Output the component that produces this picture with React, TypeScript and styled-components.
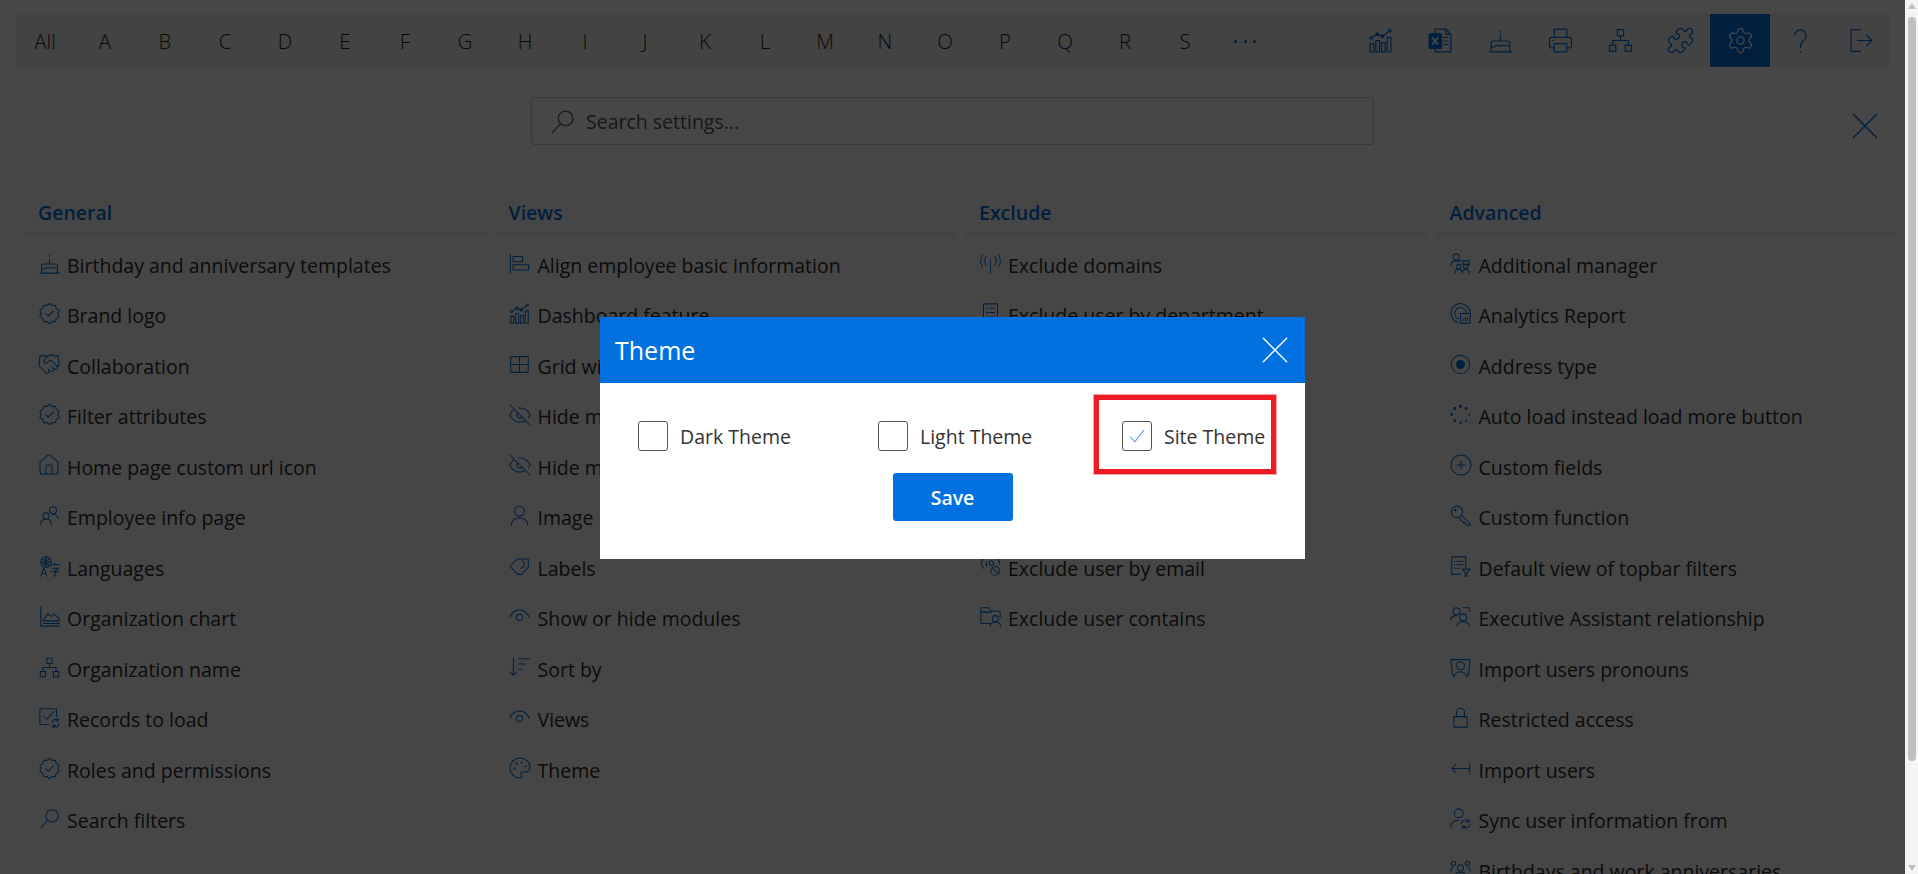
import React from 'react'
import styled, { createGlobalStyle } from 'styled-components'
import { CirclePlus, EyeOff, Handshake, House, Palette, Puzzle, Settings } from 'lucide-react'

const GlobalStyle = createGlobalStyle`
  html, body {
    margin: 0;
    height: 100%;
    overflow: hidden;
    background: #fff;
  }
  body {
    font-family: 'Open Sans', 'Noto Sans', sans-serif;
    color: #2b2b2b;
  }
`

const BLUE = '#0071de'

const Page = styled.div`
  display: flex;
  width: 1918px;
  height: 874px;
`

const Main = styled.div`
  position: relative;
  width: 1905px;
  height: 874px;
  overflow: hidden;
  background: #fff;
`

const Toolbar = styled.div`
  display: flex;
  justify-content: space-between;
  height: 53px;
  margin: 14px 15px 0;
  background: #f0f0f0;
`

const ToolGroup = styled.div`
  display: flex;
`

const Letter = styled.div`
  display: flex;
  align-items: center;
  justify-content: center;
  width: 60px;
  font-size: 20.5px;
  font-weight: 300;
  color: #1f1f1f;
`

const Dots = styled(Letter)`
  gap: 6.5px;
`

const Dot = styled.i`
  width: 3px;
  height: 3px;
  margin-top: 1px;
  border-radius: 50%;
  background: ${BLUE};
`

const ToolButton = styled.div<{ $active?: boolean }>`
  display: flex;
  align-items: center;
  justify-content: center;
  width: 60px;
  color: ${({ $active }) => ($active ? '#fff' : BLUE)};
  background: ${({ $active }) => ($active ? BLUE : 'transparent')};
`

const SearchRow = styled.div`
  display: grid;
  grid-template-columns: 1fr 843px 1fr;
  height: 48px;
  margin-top: 30px;
`

const SearchBox = styled.div`
  grid-column: 2;
  display: flex;
  align-items: center;
  gap: 11px;
  padding-left: 18px;
  border: 1px solid #ccc;
  border-radius: 3px;
  font-size: 19.5px;
  color: #555;
`

const CloseSearch = styled.div`
  display: flex;
  justify-self: end;
  align-self: end;
  margin: 0 26px 5px 0;
  color: ${BLUE};
`

const Columns = styled.div`
  display: grid;
  grid-template-columns: repeat(4, 463.5px);
  gap: 7px;
  align-items: start;
  margin: 39px 0 0 23px;
`

const Column = styled.section`
  padding-bottom: 24px;
  background: #fafafa;
`

const ColumnTitle = styled.h2`
  display: flex;
  align-items: center;
  height: 50px;
  margin: 0;
  padding: 8px 0 0 15px;
  box-sizing: border-box;
  border-bottom: 1px solid #ddd;
  font-size: 19.5px;
  font-weight: 600;
  color: ${BLUE};
`

const ItemList = styled.ul`
  list-style: none;
  margin: 6px 0 0;
  padding: 0 0 0 15px;
`

const Item = styled.li`
  display: flex;
  align-items: center;
  gap: 7px;
  height: 50.5px;
  font-size: 19.5px;
  white-space: nowrap;
`

const ItemIcon = styled.span`
  display: flex;
  flex: none;
  align-items: center;
  justify-content: center;
  width: 22px;
  height: 21px;
  margin-top: -4px;
  color: ${BLUE};

  svg {
    flex: none;
  }
`

const Scrollbar = styled.div`
  position: relative;
  width: 13px;
  height: 874px;
  background: #f5f5f5;
`

const ScrollThumb = styled.div`
  position: absolute;
  top: 17px;
  left: 3px;
  width: 8px;
  height: 744px;
  border-radius: 4px;
  background: #c0c0c0;
`

const ScrollArrow = styled.div<{ $down?: boolean }>`
  position: absolute;
  left: 3px;
  ${({ $down }) => ($down ? 'bottom: 3px;' : 'top: 3px;')}
  border-left: 4px solid transparent;
  border-right: 4px solid transparent;
  ${({ $down }) => ($down ? 'border-top: 6px solid #c0c0c0;' : 'border-bottom: 6px solid #c0c0c0;')}
`

const Overlay = styled.div`
  position: absolute;
  inset: 0;
  display: flex;
  align-items: center;
  justify-content: center;
  padding-top: 2px;
  box-sizing: border-box;
  background: rgba(0, 0, 0, 0.72);
`

const Modal = styled.div`
  position: relative;
  width: 705px;
  height: 242px;
  background: #fff;
`

const ModalHeader = styled.div`
  display: flex;
  align-items: center;
  justify-content: space-between;
  height: 66px;
  padding: 0 16px 0 15px;
  background: ${BLUE};
  color: #fff;
  font-size: 25px;
`

const ModalClose = styled.div`
  display: flex;
`

const ThemeOptions = styled.div`
  display: grid;
  grid-template-columns: 240px 244px 1fr;
  padding: 38px 0 0 38px;
`

const ThemeOption = styled.label`
  display: flex;
  align-items: center;
  gap: 12px;
  font-size: 19.5px;
  white-space: nowrap;
  color: #333;
`

const CheckBox = styled.span`
  display: flex;
  flex: none;
  align-items: center;
  justify-content: center;
  width: 30px;
  height: 30px;
  box-sizing: border-box;
  border: 1px solid #555;
  border-radius: 3px;
  color: ${BLUE};
`

const SaveRow = styled.div`
  display: flex;
  justify-content: center;
  margin-top: 22px;
`

const SaveButton = styled.button`
  width: 120px;
  height: 48px;
  border: none;
  border-radius: 3px;
  background: ${BLUE};
  color: #fff;
  font-family: inherit;
  font-size: 19.5px;
  font-weight: 600;
`

const Callout = styled.div`
  position: absolute;
  left: 493px;
  top: 77px;
  width: 184px;
  height: 81px;
  box-sizing: border-box;
  border: 6px solid #ed1c24;
  outline: 1px solid #f6a5a8;
  outline-offset: -1px;
  pointer-events: none;
`

const Line = styled.svg`
  display: block;
  flex: none;
  fill: none;
  stroke: currentColor;
  stroke-width: 1.15;
  stroke-linecap: round;
  stroke-linejoin: round;
`

const Draw = ({ size = 21, children }: { size?: number; children: React.ReactNode }) => (
  <Line width={size} height={size} viewBox='0 0 24 24'>
    {children}
  </Line>
)

// scalloped outline of the badge icon
const badgeOutline = () => {
  const points: string[] = []
  for (let i = 0; i < 20; i++) {
    const angle = (i / 20) * Math.PI * 2
    const radius = i % 2 ? 9.6 : 11.6
    points.push(`${(12 + radius * Math.sin(angle)).toFixed(2)} ${(12 - radius * Math.cos(angle)).toFixed(2)}`)
  }
  return `M${points.join('L')}Z`
}

const GLYPHS: Record<string, React.ReactNode> = {
  chart: (
    <>
      <rect x='2' y='15' width='3.5' height='8' />
      <rect x='7.5' y='12' width='3.5' height='11' />
      <rect x='13' y='14' width='3.5' height='9' />
      <rect x='18.5' y='9' width='3.5' height='14' />
      <path d='M4 9l5-3 5 2 6-5' />
      <circle cx='3' cy='9.5' r='1.3' />
      <circle cx='9' cy='6' r='1.3' />
      <circle cx='14' cy='8' r='1.3' />
      <circle cx='21' cy='2.5' r='1.3' />
    </>
  ),
  excel: (
    <>
      <path d='M7 5V1h10l5 5v17H7v-3' />
      <path d='M17 1v5h5M15 9h4M15 12.5h4M15 16h4' />
      <rect x='1' y='5.5' width='12' height='14' rx='1' fill='currentColor' />
      <path d='M4.5 9.5l5 6M9.5 9.5l-5 6' stroke='#fff' strokeWidth='1.6' />
    </>
  ),
  cake: (
    <>
      <path d='M1 23h22M3 23v-9a1.5 1.5 0 0 1 1.5-1.5h15A1.5 1.5 0 0 1 21 14v9' />
      <path d='M3 17c2 2 3 2 4.500 0s3 2 4.500 0 3 2 4.500 0 3 2 4.500 0' />
      <path d='M12 12.500V7M12 4V2.500' />
    </>
  ),
  printer: (
    <>
      <path d='M6 9V1h12v8' />
      <path d='M6 19H3a1.500 1.500 0 0 1-1.500-1.500v-7A1.500 1.500 0 0 1 3 9h18a1.500 1.500 0 0 1 1.500 1.500v7A1.500 1.500 0 0 1 21 19h-3' />
      <rect x='6' y='15' width='12' height='8' />
      <path d='M4.500 12h1' />
    </>
  ),
  org: (
    <>
      <rect x='9' y='1.500' width='6' height='6' />
      <rect x='1.500' y='16.500' width='6' height='6' />
      <rect x='16.500' y='16.500' width='6' height='6' />
      <path d='M12 7.500V12M4.500 16.500V12h15v4.500' />
    </>
  ),
  question: <path d='M6.500 7a5.500 5.500 0 1 1 9 4.500c-2 1.600-3.500 3-3.500 5.500v2M12 22.500v.5' />,
  signout: <path d='M12 1.500H3v21h9M9 12h14M18 7l5 5-5 5' />,
  close: <path d='M2 2l20 20M22 2L2 22' />,
  search: (
    <>
      <circle cx='15' cy='9' r='7' />
      <path d='M10 14L2 23' />
    </>
  ),
  badge: (
    <>
      <path d={badgeOutline()} />
      <path d='M7.500 12l3 3 6-6' />
    </>
  ),
  people: (
    <>
      <circle cx='16' cy='6' r='4' />
      <circle cx='8' cy='12.500' r='3.500' />
      <path d='M2 22c0-4 2.500-6 6-6s6 2 6 6M15 10.500c3 0 6 1.500 7 5' />
    </>
  ),
  languages: (
    <>
      <circle cx='8' cy='7' r='6' />
      <path d='M2 7h12M8 1v12M4 3.500c2 2 6 2 8 0M4 10.500c2-2 6-2 8 0' />
      <path d='M2 23l3.500-9 3.500 9M3.200 20h4.600M14 10h9M18 8v2M15 14h7l-3.500 3v5.500l-2 .5M13 18h10' />
    </>
  ),
  area: (
    <>
      <path d='M2 1v22h21M5 20h18' />
      <path d='M5 16l5-7 4 3 3-3 6 5v3H5z' />
    </>
  ),
  records: (
    <>
      <path d='M20 11V2H1v18h10' />
      <path d='M5 10l4 4 8-9' />
      <path d='M15 18a4 4 0 0 1 7-2.500M23 19a4 4 0 0 1-7 2.500M22 13v3h-3M16 24v-3h3' />
    </>
  ),
  align: (
    <>
      <path d='M1.500 1v22' />
      <rect x='4.500' y='4' width='11' height='6' />
      <rect x='4.500' y='13.500' width='18' height='6' />
    </>
  ),
  grid: (
    <>
      <rect x='2' y='3' width='20' height='18' rx='1' />
      <path d='M12 3v18M2 12h20' />
    </>
  ),
  eye: (
    <>
      <path d='M1 12.500C4 6 8 4.500 12 4.500s8 1.500 11 8' />
      <circle cx='12' cy='13' r='3.500' />
    </>
  ),
  user: (
    <>
      <circle cx='12' cy='7' r='5.500' />
      <path d='M2.500 23c0-5 4-8.500 9.500-8.500s9.500 3.500 9.500 8.500' />
    </>
  ),
  label: (
    <>
      <path d='M1 12L9.500 3.500H22V13l-7.500 8H10z' />
      <path d='M15 5.500a4.500 4.500 0 0 1-2 8.500' />
    </>
  ),
  sort: <path d='M5 1v20M1 17l4 4 4-4M11 2h12M11 8h8M11 14h4' />,
  antenna: <path d='M12 8v15M7 4C5 7 5 11 7 14M17 4c2 3 2 7 0 10M3 2C0 6 0 12 3 16M21 2c3 4 3 10 0 14' />,
  list: (
    <>
      <rect x='4' y='1' width='16' height='22' rx='1' />
      <path d='M7.500 6h2M11.500 6h5M7.500 11h2M11.500 11h5M7.500 16h2M11.500 16h5' />
    </>
  ),
  blocked: (
    <>
      <path d='M4 3C1 6 1 10 4 14M8 6C6.500 8 6.500 10 8 12M20 3c2 2 2.500 4 2.500 6' />
      <circle cx='13' cy='8' r='2.500' />
      <circle cx='17.500' cy='17' r='5' />
      <path d='M14 13.500l7 7' />
    </>
  ),
  folder: (
    <>
      <path d='M12 20H1V2h9l3 4h10v7' />
      <path d='M1 7h12' />
      <circle cx='17.500' cy='14.500' r='3.500' />
      <path d='M11.500 23.500c0-3 2.500-5 6-5s6 2 6 5' />
    </>
  ),
  manager: (
    <>
      <circle cx='7' cy='4.500' r='3.500' />
      <path d='M1 14c0-3 2.500-5 6-5h15v5' />
      <path d='M15 11v2h7' />
      <circle cx='10' cy='15.500' r='2.500' />
      <circle cx='18' cy='15.500' r='2.500' />
      <path d='M6 23c0-3 1.500-4.500 4-4.500s4 1.500 4 4.500M14 23c0-3 1.500-4.500 4-4.500s4 1.500 4 4.500' />
    </>
  ),
  analytics: (
    <>
      <path d='M10 22.500A11 11 0 1 1 23 12' />
      <path d='M10 18A6.500 6.500 0 1 1 18.500 11' />
      <rect x='12' y='12' width='11' height='11' />
      <path d='M15 20v-2M17.500 20v-4M20 20v-3' />
    </>
  ),
  radio: (
    <>
      <circle cx='12' cy='12' r='10.500' />
      <circle cx='12' cy='12' r='4.500' fill='currentColor' />
    </>
  ),
  key: (
    <>
      <circle cx='8' cy='8' r='6.500' />
      <circle cx='6' cy='6' r='.8' fill='currentColor' />
      <path d='M13 12l10 9v2h-4l-1-2h-2v-2h-2l-2-2-1.500-3' />
    </>
  ),
  lock: (
    <>
      <rect x='4.500' y='11' width='15' height='12' />
      <path d='M7.500 11V6a4.500 4.500 0 0 1 9 0v5' />
    </>
  ),
  spinner: (
    <>
      <circle cx='12' cy='2.500' r='1.200' fill='currentColor' />
      <circle cx='18.500' cy='5' r='1' fill='currentColor' />
      <circle cx='22' cy='12' r='.6' fill='currentColor' />
      <circle cx='18.500' cy='19' r='.6' fill='currentColor' />
      <circle cx='12' cy='21.500' r='.8' fill='currentColor' />
      <circle cx='5.500' cy='19' r='.9' fill='currentColor' />
      <circle cx='2' cy='12' r='1.100' fill='currentColor' />
      <circle cx='5.500' cy='5' r='1.200' fill='currentColor' />
    </>
  ),
  filterList: (
    <>
      <path d='M12 21H2V1h16v12' />
      <path d='M5 6h1M8 6h7M5 10h1M8 10h7M5 14h1M8 14h3' />
      <path d='M14 15h9l-3.500 4v4h-2v-4z' />
    </>
  ),
  assistant: (
    <>
      <circle cx='7.500' cy='6' r='4' />
      <path d='M1 16c0-3 2.500-5 6-5M15 2h7v4' />
      <circle cx='15' cy='13' r='4' />
      <path d='M8 23c0-3 3-5 7-5s7 2 7 5' />
    </>
  ),
  pronouns: (
    <>
      <path d='M4 21H3L1 3h22l-2 18h-1' />
      <circle cx='12' cy='10' r='4.500' />
      <path d='M5 23c0-3.500 3-6 7-6s7 2.500 7 6' />
    </>
  ),
  importArrow: <path d='M22.500 6v12M22 12H2M7 7l-5 5 5 5' />,
  syncUser: (
    <>
      <circle cx='10' cy='6' r='5' />
      <path d='M1 22c0-5 3-8 9-8' />
      <path d='M13 18a4.500 4.500 0 0 1 8-2.500M23 18.500a4.500 4.500 0 0 1-8 2.500M21.500 13v3h-3M14.500 24v-3h3' />
    </>
  ),
  birthdays: (
    <>
      <circle cx='4' cy='5' r='2.500' />
      <circle cx='20' cy='5' r='2.500' />
      <circle cx='12' cy='10' r='3.500' />
      <path d='M1 14c0-3 1-4.500 3-4.500M23 14c0-3-1-4.500-3-4.500M5 22c0-4 3-7 7-7s7 3 7 7' />
    </>
  ),
  check: <path d='M3 13l6 7L21 4' />,
}

const LUCIDE: Record<string, typeof House> = {
  handshake: Handshake,
  home: House,
  eyeOff: EyeOff,
  palette: Palette,
  plus: CirclePlus,
  puzzle: Puzzle,
  gear: Settings,
}

const Icon = ({ name, size = 21 }: { name: string; size?: number }) => {
  const Lucide = LUCIDE[name]
  // lucide glyphs leave more air inside their box, so draw them a little larger
  if (Lucide) return <Lucide size={Math.round(size * 1.15)} strokeWidth={1.05} style={{ flex: 'none' }} />
  return <Draw size={size}>{GLYPHS[name]}</Draw>
}

const LETTERS = ['All', ...'ABCDEFGHIJKLMNOPQRS'.split('')]

const TOOLS = ['chart', 'excel', 'cake', 'printer', 'org', 'puzzle', 'gear', 'question', 'signout']

const SECTIONS: { title: string; items: [string, string][] }[] = [
  {
    title: 'General',
    items: [
      ['cake', 'Birthday and anniversary templates'],
      ['badge', 'Brand logo'],
      ['handshake', 'Collaboration'],
      ['badge', 'Filter attributes'],
      ['home', 'Home page custom url icon'],
      ['people', 'Employee info page'],
      ['languages', 'Languages'],
      ['area', 'Organization chart'],
      ['org', 'Organization name'],
      ['records', 'Records to load'],
      ['badge', 'Roles and permissions'],
      ['search', 'Search filters'],
    ],
  },
  {
    title: 'Views',
    items: [
      ['align', 'Align employee basic information'],
      ['chart', 'Dashboard feature'],
      ['grid', 'Grid width'],
      ['eyeOff', 'Hide modules'],
      ['eyeOff', 'Hide menu'],
      ['user', 'Image'],
      ['label', 'Labels'],
      ['eye', 'Show or hide modules'],
      ['sort', 'Sort by'],
      ['eye', 'Views'],
      ['palette', 'Theme'],
    ],
  },
  {
    title: 'Exclude',
    items: [
      ['antenna', 'Exclude domains'],
      ['list', 'Exclude user by department'],
      ['list', 'Exclude user by title'],
      ['list', 'Exclude user by location'],
      ['list', 'Exclude user by name'],
      ['list', 'Exclude user by type'],
      ['blocked', 'Exclude user by email'],
      ['folder', 'Exclude user contains'],
    ],
  },
  {
    title: 'Advanced',
    items: [
      ['manager', 'Additional manager'],
      ['analytics', 'Analytics Report'],
      ['radio', 'Address type'],
      ['spinner', 'Auto load instead load more button'],
      ['plus', 'Custom fields'],
      ['key', 'Custom function'],
      ['filterList', 'Default view of topbar filters'],
      ['assistant', 'Executive Assistant relationship'],
      ['pronouns', 'Import users pronouns'],
      ['lock', 'Restricted access'],
      ['importArrow', 'Import users'],
      ['syncUser', 'Sync user information from'],
      ['birthdays', 'Birthdays and work anniversaries'],
    ],
  },
]

const THEMES = [
  { label: 'Dark Theme', checked: false },
  { label: 'Light Theme', checked: false },
  { label: 'Site Theme', checked: true },
]

export default function App() {
  return (
    <Page>
      <GlobalStyle />
      <Main>
        <Toolbar>
          <ToolGroup>
            {LETTERS.map((letter) => (
              <Letter key={letter}>{letter}</Letter>
            ))}
            <Dots>
              <Dot />
              <Dot />
              <Dot />
            </Dots>
          </ToolGroup>
          <ToolGroup>
            {TOOLS.map((tool) => (
              <ToolButton key={tool} $active={tool === 'gear'}>
                <Icon name={tool} size={25} />
              </ToolButton>
            ))}
          </ToolGroup>
        </Toolbar>

        <SearchRow>
          <SearchBox>
            <Icon name='search' size={25} />
            Search settings...
          </SearchBox>
          <CloseSearch>
            <Icon name='close' size={28} />
          </CloseSearch>
        </SearchRow>

        <Columns>
          {SECTIONS.map((section) => (
            <Column key={section.title}>
              <ColumnTitle>{section.title}</ColumnTitle>
              <ItemList>
                {section.items.map(([icon, label]) => (
                  <Item key={label}>
                    <ItemIcon>
                      <Icon name={icon} />
                    </ItemIcon>
                    {label}
                  </Item>
                ))}
              </ItemList>
            </Column>
          ))}
        </Columns>

        <Overlay>
          <Modal>
            <ModalHeader>
              Theme
              <ModalClose>
                <Icon name='close' size={28} />
              </ModalClose>
            </ModalHeader>
            <ThemeOptions>
              {THEMES.map((theme) => (
                <ThemeOption key={theme.label}>
                  <CheckBox>{theme.checked && <Icon name='check' size={18} />}</CheckBox>
                  {theme.label}
                </ThemeOption>
              ))}
            </ThemeOptions>
            <SaveRow>
              <SaveButton>Save</SaveButton>
            </SaveRow>
            <Callout />
          </Modal>
        </Overlay>
      </Main>
      <Scrollbar>
        <ScrollArrow />
        <ScrollThumb />
        <ScrollArrow $down />
      </Scrollbar>
    </Page>
  )
}
